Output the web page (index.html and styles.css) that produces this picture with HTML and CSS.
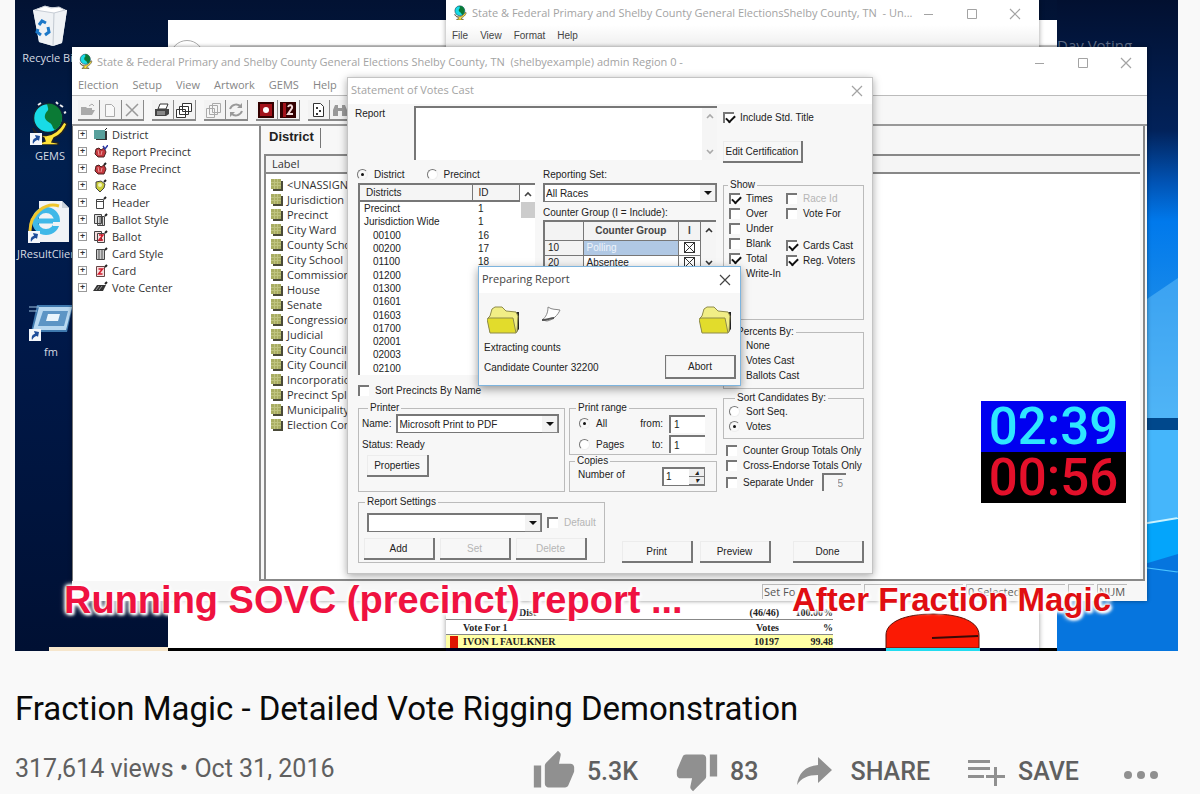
FILE: index.html
```html
<!DOCTYPE html>
<html lang="en">
<head>
  <meta charset="UTF-8" />
  <meta name="viewport" content="width=device-width, initial-scale=1.0" />
  <title>Fraction Magic - Detailed Vote Rigging Demonstration</title>
  <link rel="stylesheet" href="styles.css">
</head>
<body>
  <!-- shared icons -->
  <svg class="sprite" aria-hidden="true">
    <symbol id="i-min" viewBox="0 0 12 12"><path d="M1 6.500h9" fill="none" stroke="currentColor"/></symbol>
    <symbol id="i-max" viewBox="0 0 12 12"><path d="M1.500 1.500h9v9h-9z" fill="none" stroke="currentColor"/></symbol>
    <symbol id="i-close" viewBox="0 0 12 12"><path d="M1 1l10 10M11 1L1 11" fill="none" stroke="currentColor" stroke-width="1.200"/></symbol>
    <symbol id="i-up" viewBox="0 0 10 10"><path d="M2 7l3-3 3 3" fill="none" stroke="currentColor" stroke-width="1.600"/></symbol>
    <symbol id="i-down" viewBox="0 0 10 10"><path d="M2 3l3 3 3-3" fill="none" stroke="currentColor" stroke-width="1.600"/></symbol>
    <symbol id="i-globe" viewBox="0 0 40 44">
      <path d="M3 27c4 10 21 12 31-6l3 2c-3 8-8 12-13 14l-2 4 6 1v2H9v-2l6-2-1-3C8 35 4 32 3 27z" fill="#ffe338" stroke="#222" stroke-width="1.500"/>
      <circle cx="18" cy="17" r="14.500" fill="#18dbe6" stroke="#123" stroke-width="1.500"/>
      <path d="M17 3c8-2 15 6 15 13 0 6-3 11-7 13-3-2-2-5-5-7s-6-4-5-8 4-4 3-7z" fill="#0b7a35"/>
      <path d="M8 4l3-2M30 4l3 2M26 1l2 2M34 12l2-1" stroke="#eee" stroke-width="2"/>
    </symbol>
    <symbol id="i-shortcut" viewBox="0 0 12 12"><path d="M0 0h12v12H0z" fill="#f4f7fb"/><path d="M3 11c-1-4 1-6 3-6L5 2l5 1-1 5-1-1c-2 0-3 1-5 4z" fill="#1e4d9a"/></symbol>
    <symbol id="i-grid" viewBox="0 0 12 12"><path d="M2 2h10v10H2z" fill="#4a4a38"/><path d="M0 0h10v10H0z" fill="#a9ad62"/><path d="M0 3.500h10M0 6.500h10M3.500 0v10M6.500 0v10" stroke="#bfc380" fill="none"/></symbol>
    <symbol id="i-folder" viewBox="0 0 34 28">
      <path d="M26 6l6 0v17l-3 4z" fill="#222"/>
      <path d="M3 26l-2-14 2-2 2-7 3-2h7l4 4 10 1 2 4-1 16z" fill="#f1ee86" stroke="#8e8b4a"/>
      <path d="M3 27L0 13l2-1h24l3 15z" fill="#e2dc2c" stroke="#8e8b4a"/>
    </symbol>
    <symbol id="i-district" viewBox="0 0 15 13"><path d="M3 3h11v9H3z" fill="#333"/><path d="M1 2h11v9H1z" fill="#58a09c"/><path d="M12 2l2-2" stroke="#222"/></symbol>
    <symbol id="i-precinct" viewBox="0 0 15 13"><path d="M3 4l3-1 2 2 3-2 2 4-2 5H5L2 9z" fill="#c3373d" stroke="#4a2222"/><path d="M5 5l1 5M9 6l-1 4" stroke="#efa0a0"/><path d="M10 1l2 3 3-4" stroke="#2b39a4" stroke-width="1.500" fill="none"/></symbol>
    <symbol id="i-base" viewBox="0 0 15 13"><path d="M3 4l3-1 2 2 3-2 2 4-2 5H5L2 9z" fill="#c3373d" stroke="#4a2222"/><path d="M5 5l1 5M9 6l-1 4" stroke="#efa0a0"/><path d="M11 3l2-2" stroke="#222" stroke-width="2"/></symbol>
    <symbol id="i-race" viewBox="0 0 15 13"><path d="M3 3l5-1 4 3-1 4-4 4-4-4z" fill="#c9cc3a" stroke="#444"/><circle cx="7" cy="6" r="2" fill="#f4f4b8"/><path d="M11 3l2-2" stroke="#222" stroke-width="2"/></symbol>
    <symbol id="i-header" viewBox="0 0 15 13"><path d="M3.500 3.500h7v9h-7zM3.500 5.500h7" fill="#fff" stroke="#444"/><path d="M11 3l2-2" stroke="#222" stroke-width="2"/></symbol>
    <symbol id="i-bstyle" viewBox="0 0 15 13"><path d="M1.500 1.500h7v9h-7zM4.500 3.500h7v9h-7z" fill="#ddd" stroke="#444"/><path d="M7 4v8M9.500 4v8" stroke="#555"/><path d="M12 3l2-2" stroke="#222" stroke-width="2"/></symbol>
    <symbol id="i-ballot" viewBox="0 0 15 13"><path d="M1.500 1.500h7v9h-7zM4.500 3.500h7v9h-7z" fill="#f6dede" stroke="#444"/><path d="M6 5h4l-4 5h4" stroke="#d21b2c" fill="none" stroke-width="1.500"/><path d="M12 3l2-2" stroke="#222" stroke-width="2"/></symbol>
    <symbol id="i-cstyle" viewBox="0 0 15 13"><path d="M3.500 2.500h8v10h-8z" fill="#ccc" stroke="#444"/><path d="M6 3v9M9 3v9" stroke="#555"/><path d="M12 3l2-2" stroke="#222" stroke-width="2"/></symbol>
    <symbol id="i-card" viewBox="0 0 15 13"><path d="M3.500 2.500h8v10h-8z" fill="#f6dede" stroke="#644"/><path d="M5.500 5h4l-4 5h4" stroke="#d21b2c" fill="none" stroke-width="1.500"/><path d="M12 3l2-2" stroke="#222" stroke-width="2"/></symbol>
    <symbol id="i-center" viewBox="0 0 15 13"><path d="M0 10l4-6h9l-3 6z" fill="#333"/><path d="M3 9l3-4M6 9l3-4" stroke="#999"/><path d="M12 3l2-2" stroke="#222" stroke-width="2"/></symbol>
  </svg>

  <section class="video" aria-label="Video">
    <div class="wallpaper">
      <svg viewBox="0 0 32 651" preserveAspectRatio="none" aria-hidden="true">
        <defs><linearGradient id="sky" x1="0" y1="0" x2="0" y2="1">
          <stop offset="0" stop-color="#021030"/><stop offset=".2" stop-color="#02225a"/>
          <stop offset=".28" stop-color="#0153b4"/><stop offset=".34" stop-color="#0079ec"/>
          <stop offset=".45" stop-color="#1487ea"/><stop offset=".6" stop-color="#3ba8f2"/>
          <stop offset=".64" stop-color="#41b0f8"/>
        </linearGradient></defs>
        <path d="M0 0h32v651H0z" fill="url(#sky)"/>
        <path d="M0 360l32-82v140H0z" fill="#58b8f6" opacity=".6"/>
        <path d="M0 418h32v12H0z" fill="#00488c"/>
        <path d="M0 430h32v92H0z" fill="#45b6fb"/>
        <path d="M0 538l32-20v54H0z" fill="#04a5fb"/>
        <path d="M0 538l32-20" stroke="#c9f3ff" stroke-width="1.500"/>
        <path d="M0 590l32-36v97H0z" fill="#0675de"/>
        <path d="M0 556l32 16" stroke="#4ac4ff"/>
      </svg>
    </div>
    <span class="wall-text">Day Voting</span>

    <!-- desktop shortcuts -->
    <a class="shortcut s-bin" href="#">
      <svg width="38" height="42" viewBox="0 0 38 42" aria-hidden="true"><path d="M1 5l12-4 22 4-5 33-9 3-14-4z" fill="#dfe4ea"/><path d="M1 5l21 3 13-3-5 33-9 3-14-4z" fill="#eff2f5"/><path d="M22 8l-1 33" stroke="#c3cad2"/><path d="M3 5l10-4 6 2 8-1 6 3-11 3z" fill="#fff" stroke="#c8ced6"/><g fill="none" stroke="#1c78c8" stroke-width="3"><path d="M7 20l3-4 4 2"/><path d="M16 22l1 5-4 3"/><path d="M9 30l-4-3 1-3"/></g></svg>
      Recycle Bin</a>
    <a class="shortcut s-gems" href="#">
      <span class="pic"><svg width="40" height="44"><use href="#i-globe"/></svg><svg class="arrow" width="12" height="12"><use href="#i-shortcut"/></svg></span>
      GEMS</a>
    <a class="shortcut s-java" href="#">
      <span class="pic"><svg width="42" height="42" viewBox="0 0 42 42" aria-hidden="true"><path d="M11 0h23l7 7v34H11z" fill="#f1f3f6"/><path d="M34 0v7h7" fill="#cdd3da"/><circle cx="18" cy="20" r="11" fill="none" stroke="#3fb8e8" stroke-width="6"/><path d="M9 20h19" stroke="#3fb8e8" stroke-width="5"/><path d="M25 23h9" stroke="#f1f3f6" stroke-width="4"/><path d="M2 30C2 12 18 1 31 5" fill="none" stroke="#efc52d" stroke-width="3"/></svg><svg class="arrow" width="12" height="12"><use href="#i-shortcut"/></svg></span>
      JResultClient</a>
    <a class="shortcut s-fm" href="#">
      <span class="pic"><svg width="44" height="38" viewBox="0 0 44 38" aria-hidden="true"><path d="M8 2h36l-6 27H2z" fill="#3f79ae"/><path d="M10 4h33l-6 23H4z" fill="#b8d8f0"/><path d="M14 8h25l-4 15H9z" fill="#5d95c5"/><path d="M19 11h12l-2 7H17z" fill="#eaf5fc"/><path d="M0 4h10M0 8h8" stroke="#9fc3e0"/></svg><svg class="arrow" width="12" height="12"><use href="#i-shortcut"/></svg></span>
      fm</a>

    <!-- browser behind everything else -->
    <div class="window w-back"><div class="nav"><i class="back"></i><i class="address"></i></div></div>
    <div class="cream"></div>

    <!-- report preview window -->
    <div class="window w-preview">
      <div class="titlebar">
        <svg width="15" height="15" class="app"><use href="#i-globe"/></svg>
        <span class="caption">State &amp; Federal Primary and Shelby County General ElectionsShelby County, TN&nbsp; - Un...</span>
        <button aria-label="Minimize"><svg width="12" height="12"><use href="#i-min"/></svg></button>
        <button aria-label="Maximize"><svg width="12" height="12"><use href="#i-max"/></svg></button>
        <button aria-label="Close"><svg width="12" height="12"><use href="#i-close"/></svg></button>
      </div>
      <nav class="menu menu-dark"><a href="#">File</a><a href="#">View</a><a href="#">Format</a><a href="#">Help</a></nav>
      <div class="report">
        <table>
          <tr><td></td><td class="dist">Dist</td><td>(46/46)</td><td>100.00%</td></tr>
          <tr><td></td><td>Vote For 1</td><td>Votes</td><td>%</td></tr>
          <tr class="hit"><td><i></i></td><td>IVON L FAULKNER</td><td>10197</td><td>99.48</td></tr>
        </table>
        <svg width="96" height="38" viewBox="0 0 96 38" aria-hidden="true"><path d="M1 35V22C1 9 20 1 48 1s46 8 46 21v13z" fill="#fb1a04" stroke="#5a1008"/><path d="M47 25l46-2" stroke="#3a0a06" stroke-width="2"/><path d="M1 35h94v3H1z" fill="#22dcf0"/></svg>
      </div>
    </div>

    <!-- GEMS main window -->
    <div class="window w-main">
      <div class="titlebar">
        <svg width="14" height="16" class="app"><use href="#i-globe"/></svg>
        <span class="caption">State &amp; Federal Primary and Shelby County General Elections Shelby County, TN&nbsp; (shelbyexample) admin Region 0 -</span>
        <button aria-label="Minimize"><svg width="12" height="12"><use href="#i-min"/></svg></button>
        <button aria-label="Maximize"><svg width="12" height="12"><use href="#i-max"/></svg></button>
        <button aria-label="Close"><svg width="12" height="12"><use href="#i-close"/></svg></button>
      </div>
      <nav class="menu"><a href="#">Election</a><a href="#">Setup</a><a href="#">View</a><a href="#">Artwork</a><a href="#">GEMS</a><a href="#">Help</a></nav>
      <div class="toolbar">
        <div class="group">
          <button aria-label="Open"><svg viewBox="0 0 16 16"><path d="M1 13V5h5l1 1h5v2h3l-3 5z" fill="#aaa"/><path d="M9 4l3-2 2 2" stroke="#aaa" fill="none"/></svg></button>
          <button aria-label="New"><svg viewBox="0 0 16 16"><path d="M3.500 2.500h6l3 3v9h-9z" fill="#f8f8f8" stroke="#aaa"/></svg></button>
          <button aria-label="Delete"><svg viewBox="0 0 16 16"><path d="M2 2l12 12M14 2L2 14" stroke="#999" stroke-width="1.500"/></svg></button>
        </div>
        <div class="group">
          <button aria-label="Print"><svg viewBox="0 0 16 16"><path d="M4 7l2-5h8l-2 5z" fill="#fff" stroke="#333"/><path d="M1 7h14v5l-3 2H1z" fill="#444"/><path d="M3 10h8M3 12h8" stroke="#ccc"/></svg></button>
          <button aria-label="Copies"><svg viewBox="0 0 16 16"><path d="M6.500 1.500h9v8h-9zM3.500 4.500h9v8h-9zM.500 7.500h9v8h-9z" fill="#fff" stroke="#333"/></svg></button>
        </div>
        <div class="group">
          <button aria-label="Move"><svg viewBox="0 0 16 16"><path d="M6.500 1.500h8v9h-8zM3.500 3.500h8v9h-8zM.500 6.500h8v9h-8z" fill="#f6f6f6" stroke="#aaa"/></svg></button>
          <button aria-label="Refresh"><svg viewBox="0 0 16 16"><path d="M2 7c2-5 8-6 11-2M14 9c-2 5-8 6-11 2" stroke="#999" stroke-width="2" fill="none"/><path d="M14 1v5H9zM2 15v-5h5z" fill="#999"/></svg></button>
        </div>
        <div class="group">
          <button aria-label="Record"><svg viewBox="0 0 16 16"><path d="M0 0h16v16H0z" fill="#300"/><path d="M2 2h12v12H2z" fill="#a3121a"/><circle cx="8" cy="8" r="3" fill="#fff"/></svg></button>
          <button aria-label="Record 2"><svg viewBox="0 0 16 16"><path d="M0 0h16v16H0z" fill="#300"/><path d="M3 1h3v14H3z" fill="#a3121a"/><path d="M8 5c1-3 5-2 4 1l-4 6h5" stroke="#f3dada" stroke-width="2" fill="none"/></svg></button>
        </div>
        <div class="group">
          <button aria-label="Options"><svg viewBox="0 0 16 16"><path d="M3.500 1.500h7l3 3v10h-10z" fill="#fff" stroke="#333"/><path d="M6 5h2v2H6zM9 8h2v2H9zM6 11h2v2H6z" fill="#333"/></svg></button>
          <button aria-label="Find"><svg viewBox="0 0 16 16"><path d="M1 14V8l2-5h3v11zM10 14V3h3l2 5v6zM6 6h4v3H6z" fill="#999"/></svg></button>
        </div>
      </div>
      <div class="panes">
        <ul class="tree">
          <li><b>+</b><svg><use href="#i-district"/></svg>District</li>
          <li><b>+</b><svg><use href="#i-precinct"/></svg>Report Precinct</li>
          <li><b>+</b><svg><use href="#i-base"/></svg>Base Precinct</li>
          <li><b>+</b><svg><use href="#i-race"/></svg>Race</li>
          <li><b>+</b><svg><use href="#i-header"/></svg>Header</li>
          <li><b>+</b><svg><use href="#i-bstyle"/></svg>Ballot Style</li>
          <li><b>+</b><svg><use href="#i-ballot"/></svg>Ballot</li>
          <li><b>+</b><svg><use href="#i-cstyle"/></svg>Card Style</li>
          <li><b>+</b><svg><use href="#i-card"/></svg>Card</li>
          <li><b>+</b><svg><use href="#i-center"/></svg>Vote Center</li>
        </ul>
        <div class="detail">
          <div class="tab"><span>District</span></div>
          <div class="labels">
            <div class="head">Label</div>
            <ul>
              <li><svg><use href="#i-grid"/></svg>&lt;UNASSIGNED&gt;</li>
              <li><svg><use href="#i-grid"/></svg>Jurisdiction</li>
              <li><svg><use href="#i-grid"/></svg>Precinct</li>
              <li><svg><use href="#i-grid"/></svg>City Ward</li>
              <li><svg><use href="#i-grid"/></svg>County School</li>
              <li><svg><use href="#i-grid"/></svg>City School</li>
              <li><svg><use href="#i-grid"/></svg>Commission</li>
              <li><svg><use href="#i-grid"/></svg>House</li>
              <li><svg><use href="#i-grid"/></svg>Senate</li>
              <li><svg><use href="#i-grid"/></svg>Congressional</li>
              <li><svg><use href="#i-grid"/></svg>Judicial</li>
              <li><svg><use href="#i-grid"/></svg>City Council</li>
              <li><svg><use href="#i-grid"/></svg>City Council</li>
              <li><svg><use href="#i-grid"/></svg>Incorporation</li>
              <li><svg><use href="#i-grid"/></svg>Precinct Split</li>
              <li><svg><use href="#i-grid"/></svg>Municipality</li>
              <li><svg><use href="#i-grid"/></svg>Election Contest</li>
            </ul>
          </div>
        </div>
      </div>
      <div class="status"><span>Set Fo</span><span></span><span>0 Selected</span><span></span><span>NUM</span></div>
    </div>

    <!-- Statement of Votes Cast -->
    <form class="window w-dialog" onsubmit="return false">
      <div class="titlebar"><span class="caption">Statement of Votes Cast</span>
        <button type="button" aria-label="Close"><svg width="12" height="12"><use href="#i-close"/></svg></button></div>
      <div class="form">
        <div class="upper">
          <div class="left">
            <div class="report-row">
              <label for="rpt">Report</label>
              <div class="memo"><textarea id="rpt"></textarea><span class="scroll"><svg><use href="#i-up"/></svg><svg><use href="#i-down"/></svg></span></div>
            </div>
            <div class="two">
              <div class="by">
                <div class="line radios">
                  <label><input type="radio" name="by" checked>District</label>
                  <label><input type="radio" name="by">Precinct</label>
                </div>
                <div class="districts">
                  <table>
                    <thead><tr><th>Districts</th><th>ID</th></tr></thead>
                    <tbody>
                      <tr><td>Precinct</td><td>1</td></tr>
                      <tr><td>Jurisdiction Wide</td><td>1</td></tr>
                      <tr class="sub"><td>00100</td><td>16</td></tr>
                      <tr class="sub"><td>00200</td><td>17</td></tr>
                      <tr class="sub"><td>01100</td><td>18</td></tr>
                      <tr class="sub"><td>01200</td><td></td></tr>
                      <tr class="sub"><td>01300</td><td></td></tr>
                      <tr class="sub"><td>01601</td><td></td></tr>
                      <tr class="sub"><td>01603</td><td></td></tr>
                      <tr class="sub"><td>01700</td><td></td></tr>
                      <tr class="sub"><td>02001</td><td></td></tr>
                      <tr class="sub"><td>02003</td><td></td></tr>
                      <tr class="sub"><td>02100</td><td></td></tr>
                    </tbody>
                  </table>
                  <span class="scroll"><svg><use href="#i-up"/></svg><i></i></span>
                </div>
              </div>
              <div class="sets">
                <label class="line" for="set">Reporting Set:</label>
                <div class="combo"><select id="set"><option>All Races</option></select></div>
                <span class="line gap">Counter Group (I = Include):</span>
                <div class="counter">
                  <table>
                    <tr><th></th><th>Counter Group</th><th>I</th></tr>
                    <tr class="picked"><td>10</td><td>Polling</td><td><i class="xbox"></i></td></tr>
                    <tr><td>20</td><td>Absentee</td><td><i class="xbox"></i></td></tr>
                  </table>
                  <span class="scroll dark"><svg><use href="#i-up"/></svg><svg><use href="#i-down"/></svg></span>
                </div>
              </div>
            </div>
            <label class="sort"><input type="checkbox">Sort Precincts By Name</label>
            <div class="printing">
              <fieldset class="printer"><legend>Printer</legend>
                <div class="pair"><label for="prn">Name:</label><div class="combo"><select id="prn"><option>Microsoft Print to PDF</option></select></div></div>
                <p>Status: Ready</p>
                <button type="button" class="btn small">Properties</button>
              </fieldset>
              <div class="stack">
                <fieldset class="range"><legend>Print range</legend>
                  <label><input type="radio" name="pages" checked>All</label><label class="r" for="from">from:</label><input type="text" id="from" value="1">
                  <label><input type="radio" name="pages">Pages</label><label class="r" for="to">to:</label><input type="text" id="to" value="1">
                </fieldset>
                <fieldset class="copies"><legend>Copies</legend>
                  <label for="copies">Number of</label>
                  <div class="spin"><input type="text" id="copies" value="1"><span><i>▴</i><i>▾</i></span></div>
                </fieldset>
              </div>
            </div>
          </div>
          <div class="right">
            <label><input type="checkbox" checked>Include Std. Title</label>
            <button type="button" class="btn cert">Edit Certification</button>
            <fieldset class="show"><legend>Show</legend>
              <div>
                <label><input type="checkbox" checked>Times</label>
                <label><input type="checkbox">Over</label>
                <label><input type="checkbox">Under</label>
                <label><input type="checkbox">Blank</label>
                <label><input type="checkbox" checked>Total</label>
                <label><input type="checkbox">Write-In</label>
              </div>
              <div>
                <label class="off"><input type="checkbox" disabled>Race Id</label>
                <label class="votefor"><input type="checkbox">Vote For</label>
                <label><input type="checkbox" checked>Cards Cast</label>
                <label><input type="checkbox" checked>Reg. Voters</label>
              </div>
            </fieldset>
            <fieldset class="percents"><legend>Percents By:</legend>
              <label><input type="radio" name="pct">None</label>
              <label><input type="radio" name="pct" checked>Votes Cast</label>
              <label><input type="radio" name="pct">Ballots Cast</label>
            </fieldset>
            <fieldset class="cands"><legend>Sort Candidates By:</legend>
              <label><input type="radio" name="cand">Sort Seq.</label>
              <label><input type="radio" name="cand" checked>Votes</label>
            </fieldset>
            <div class="opts">
              <label><input type="checkbox">Counter Group Totals Only</label>
              <label><input type="checkbox">Cross-Endorse Totals Only</label>
              <div class="under"><label><input type="checkbox">Separate Under</label><input type="text" aria-label="Separate under" value="5" disabled></div>
            </div>
          </div>
        </div>
        <div class="lower">
          <fieldset class="settings"><legend>Report Settings</legend>
            <div class="pair"><div class="combo"><select aria-label="Report Settings"><option></option></select></div>
              <label class="off"><input type="checkbox" disabled>Default</label></div>
            <div class="btns"><button type="button" class="btn">Add</button><button type="button" class="btn" disabled>Set</button><button type="button" class="btn" disabled>Delete</button></div>
          </fieldset>
          <div class="final"><button type="button" class="btn">Print</button><button type="button" class="btn">Preview</button><button type="button" class="btn done">Done</button></div>
        </div>
      </div>
    </form>

    <!-- progress popup -->
    <div class="window w-progress">
      <div class="titlebar"><span class="caption">Preparing Report</span>
        <button aria-label="Close"><svg width="12" height="12"><use href="#i-close"/></svg></button></div>
      <div class="anim">
        <svg width="34" height="28"><use href="#i-folder"/></svg>
        <svg class="sheet" width="20" height="18" viewBox="0 0 20 18"><path d="M7 1c4 3 8 2 12 3-2 5-7 10-13 11L1 14c4-3 6-7 6-13z" fill="#fff" stroke="#888"/><path d="M1 14c6 0 8-2 12-2" fill="none" stroke="#555" stroke-width="2"/></svg>
        <svg width="34" height="28"><use href="#i-folder"/></svg>
      </div>
      <p>Extracting counts</p>
      <div class="bottom"><span>Candidate Counter 32200</span><button class="btn abort">Abort</button></div>
    </div>

    <div class="clock"><div class="total">02:39</div><div class="lap">00:56</div></div>
    <div class="overlay o-left">Running SOVC (precinct) report ...</div>
    <div class="overlay o-right">After Fraction Magic</div>
  </section>

  <main class="info">
    <h1>Fraction Magic - Detailed Vote Rigging Demonstration</h1>
    <div class="meta">
      <span class="views">317,614 views • Oct 31, 2016</span>
      <div class="actions">
        <button><svg width="44" height="44" viewBox="0 0 24 24"><path d="M1 21h4V9H1v12zm22-11c0-1.100-.900-2-2-2h-6.310l.950-4.570.030-.320c0-.410-.170-.790-.440-1.060L14.170 1 7.590 7.590C7.220 7.950 7 8.450 7 9v10c0 1.100.900 2 2 2h9c.830 0 1.540-.500 1.840-1.220l3.020-7.050c.090-.230.140-.470.140-.730v-2z"/></svg>5.3K</button>
        <button><svg width="44" height="44" viewBox="0 0 24 24"><path d="M15 3H6c-.830 0-1.540.500-1.840 1.220l-3.020 7.050c-.090.230-.140.470-.140.730v2c0 1.100.900 2 2 2h6.310l-.950 4.570-.030.320c0 .410.170.790.440 1.060L9.830 23l6.590-6.590c.360-.360.580-.860.580-1.410V5c0-1.100-.900-2-2-2zm4 0v12h4V3h-4z"/></svg>83</button>
        <button><svg width="44" height="44" viewBox="0 0 44 44"><path d="M22 8l14 13-14 13v-8C12 26 5 29 1 36c1-11 8-19 21-20z"/></svg>SHARE</button>
        <button><svg width="40" height="44" viewBox="0 0 40 44"><path d="M1 11h22v3H1zM1 18h22v3H1zM1 26h16v3H1zM27 18h3v8h8v3h-8v8h-3v-8h-8v-3h8z"/></svg>SAVE</button>
        <button class="more" aria-label="More actions"><svg width="34" height="44" viewBox="0 0 34 44"><circle cx="4" cy="26" r="4"/><circle cx="17" cy="26" r="4"/><circle cx="30" cy="26" r="4"/></svg></button>
      </div>
    </div>
  </main>
</body>
</html>
```
FILE: styles.css
```css
* {
  box-sizing: border-box;
}
body {
  margin: 0;
  background: #f9f9f9;
  font-family: Roboto, sans-serif;
  overflow: hidden;
}
ul, p, fieldset, legend {
  margin: 0;
  padding: 0;
}
ul {
  list-style: none;
}
button, input, select, textarea {
  font: inherit;
  color: inherit;
  margin: 0;
}
a {
  color: inherit;
  text-decoration: none;
}
.sprite {
  display: none;
}

/* video frame */
.video {
  position: relative;
  aspect-ratio: 1163 / 651;
  margin: 0 22px 0 15px;
  overflow: hidden;
  background: linear-gradient(#021233, #001f4e 25%, #00194a 50%, #001033);
  font-family: "Open Sans", "Noto Sans", sans-serif;
  font-size: 11px;
  line-height: 15px;
  color: #333;
}
.wallpaper {
  position: absolute;
  top: 0;
  right: 0;
  bottom: 0;
  width: 121px;
}
.wallpaper svg {
  display: block;
  width: 100%;
  height: 100%;
}
.wall-text {
  position: absolute;
  left: 1042px;
  top: 38px;
  color: #5f6c86;
  font-size: 15px;
}
.shortcut {
  position: absolute;
  display: flex;
  flex-direction: column;
  align-items: center;
  gap: 3px;
  width: 84px;
  color: #d5dae2;
  white-space: nowrap;
}
.pic {
  position: relative;
}
.pic svg {
  display: block;
}
.pic .arrow {
  position: absolute;
  left: 0;
  bottom: 0;
}
.s-bin { left: -6px; top: 5px; }
.s-gems { left: -7px; top: 101px; }
.s-java { left: -8px; top: 201px; }
.s-fm { left: -6px; top: 303px; }

/* windows */
.window {
  position: absolute;
  display: flex;
  flex-direction: column;
  background: #f7f7f7;
}
.titlebar {
  display: flex;
  align-items: center;
  background: #fff;
  color: #a3a3a3;
}
.titlebar .caption {
  flex: 1;
  min-width: 0;
  white-space: nowrap;
}
.titlebar button {
  flex: none;
  width: 43px;
  height: 24px;
  padding: 0;
  border: 0;
  background: none;
}
.titlebar svg {
  vertical-align: middle;
}
.titlebar .app {
  flex: none;
  margin: 0 4px 0 7px;
}
.menu {
  display: flex;
  gap: 14px;
  padding: 0 6px;
  color: #858585;
}
.w-back {
  left: 153px;
  top: 20px;
  right: 121px;
  bottom: 0;
  background: #fff;
  border-bottom: 3px solid #000;
}
.nav {
  display: flex;
  gap: 26px;
  padding: 20px 0 0 2px;
}
.back {
  width: 34px;
  height: 34px;
  border: 1px solid #aaa;
  border-radius: 50%;
}
.address {
  flex: 1;
  margin-top: 5px;
  border-top: 2px solid #ccc;
}
.cream {
  position: absolute;
  left: 34px;
  bottom: 0;
  width: 119px;
  height: 4px;
  background: #f6e6cc;
}
.w-preview {
  left: 431px;
  top: 0;
  right: 139px;
  bottom: 0;
  background: #fff;
  box-shadow: 0 0 5px rgba(0, 0, 0, .4);
}
.w-preview .titlebar {
  height: 25px;
  padding-right: 3px;
}
.menu-dark {
  height: 23px;
  align-items: center;
  gap: 12px;
  padding-bottom: 2px;
  background: linear-gradient(#fff, #eee);
  color: #444;
  font-family: "Liberation Sans", Arial, sans-serif;
  font-size: 10px;
}

.report {
  display: flex;
  align-items: flex-end;
  gap: 52px;
  margin-top: auto;
  border-bottom: 3px solid #00001e;
  font: bold 10px/13px "Liberation Serif", serif;
  color: #222;
}
.report svg {
  margin-bottom: -3px;
}
.report table {
  width: 387px;
  border-collapse: collapse;
}
.report td {
  height: 15px;
  padding: 0;
  border-bottom: 1px solid #888;
  text-align: right;
  vertical-align: bottom;
}
.report td:first-child { width: 17px; }
.report td:nth-child(2) { text-align: left; }
.report td:last-child { width: 54px; }
.report .dist {
  padding-left: 56px;
}
.report .hit td {
  height: 13px;
  border: 0;
  background: #ffffa5;
}
.report .hit i {
  display: block;
  width: 8px;
  height: 12px;
  margin-left: 4px;
  background: #e01500;
}

.w-main {
  left: 57px;
  top: 47px;
  right: 31px;
  height: 554px;
  box-shadow: 0 0 4px rgba(0, 0, 0, .45);
}
.w-main .titlebar {
  height: 28px;
}
.w-main .menu {
  height: 21px;
  padding-top: 2px;
  background: #fff;
  border-bottom: 1px solid #bbb;
}
.toolbar {
  display: flex;
  gap: 8px;
  height: 30px;
  padding: 4px 6px;
  border-bottom: 2px solid #999;
}
.group {
  display: flex;
}
.toolbar button {
  width: 22px;
  height: 21px;
  padding: 1px 2px;
  border: solid #8a8a8a;
  border-width: 0 1px 2px 0;
  background: #f3f3f3;
}
.toolbar svg {
  display: block;
  width: 16px;
  height: 16px;
}
.panes {
  display: flex;
  flex: 1;
  min-height: 0;
}
.tree {
  width: 187px;
  padding-left: 5px;
  background: #fff;
  border-left: 1px solid #777;
}
.tree li {
  display: flex;
  align-items: center;
  height: 17px;
}
.tree b {
  width: 9px;
  height: 9px;
  border: 1px solid #999;
  font-size: 9px;
  line-height: 6px;
  text-align: center;
}
.tree svg {
  width: 15px;
  height: 13px;
  margin: 0 4px 0 6px;
}
.detail {
  flex: 1;
  display: flex;
  flex-direction: column;
  min-width: 0;
  margin-right: 2px;
  padding: 0 3px;
  border: solid #888;
  border-width: 0 2px 2px 2px;
}
.tab {
  height: 28px;
  padding-top: 2px;
  font: bold 13px/17px "Liberation Sans", Arial, sans-serif;
  color: #222;
}
.tab span {
  display: inline-block;
  height: 20px;
  padding: 0 6px 0 5px;
  border-right: 1px solid #777;
}
.labels {
  flex: 1;
  background: #fff;
  border-top: 2px solid #888;
  border-left: 2px solid #888;
}
.head {
  height: 18px;
  padding-left: 6px;
  border-bottom: 2px solid #888;
  background: #f5f5f5;
}
.labels ul {
  padding: 3px 0 0 5px;
}
.labels li {
  display: flex;
  align-items: center;
  gap: 4px;
  height: 15px;
}
.labels li svg {
  width: 12px;
  height: 12px;
}
.status {
  display: flex;
  justify-content: flex-end;
  gap: 3px;
  height: 20px;
  padding: 3px 20px 2px 0;
}
.status span {
  width: 99px;
  padding-left: 1px;
  border-top: 1px solid #bbb;
  border-left: 1px solid #bbb;
  line-height: 14px;
  color: #555;
}
.status span:nth-child(4) { width: 26px; }
.status span:last-child { width: 30px; }

/* old style controls */
.w-dialog, .w-progress {
  font-family: "Liberation Sans", Arial, sans-serif;
  font-size: 10px;
  line-height: 15px;
  color: #222;
}
.w-dialog .titlebar, .w-progress .titlebar {
  height: 26px;
  padding: 0 0 3px 3px;
  font-family: "Open Sans", "Noto Sans", sans-serif;
  font-size: 11px;
}
.w-dialog .titlebar button, .w-progress .titlebar button {
  width: 31px;
}
.w-dialog label {
  display: flex;
  align-items: center;
  white-space: nowrap;
}
.off, .btn:disabled {
  color: #b5b5b5;
}
input[type="checkbox"], input[type="radio"] {
  appearance: none;
  flex: none;
  width: 11px;
  height: 11px;
  margin-right: 6px;
  background: #fff;
  border: solid #777;
  border-width: 2px 0 0 2px;
}
input[type="checkbox"]:checked::before {
  content: "";
  display: block;
  width: 7px;
  height: 4px;
  margin: 1px 0 0 1px;
  border: solid #111;
  border-width: 0 0 2px 2px;
  transform: rotate(-45deg);
}
input[type="radio"] {
  border-width: 1px;
  border-color: #777 #eee #eee #777;
  border-radius: 50%;
  padding: 3px;
}
input[type="radio"]:checked {
  background: #111 content-box;
  background-clip: content-box;
}
input[type="text"] {
  width: 36px;
  height: 19px;
  padding: 0 3px;
  background: #fff;
  border: solid #777;
  border-width: 2px 0 0 2px;
  border-radius: 0;
}
fieldset {
  min-width: 0;
  border: 1px solid #bbb;
}
legend {
  margin-left: 6px;
  padding: 0 2px;
  line-height: 12px;
}
.btn {
  width: 71px;
  height: 22px;
  padding: 0;
  background: #f7f7f7;
  border: solid #777;
  border-width: 0 2px 2px 0;
  box-shadow: inset 1px 1px #ececec;
}
.combo {
  display: flex;
  position: relative;
  flex: 1;
}
.combo select {
  appearance: none;
  width: 100%;
  height: 19px;
  padding: 0 0 0 1px;
  background: #fff;
  border: solid #777;
  border-width: 2px 1px 1px 2px;
  border-radius: 0;
}
.combo::after {
  content: "";
  position: absolute;
  right: 1px;
  top: 2px;
  width: 15px;
  height: 16px;
  background: #f3f3f3;
  border-bottom: 1px solid #888;
  border-right: 1px solid #888;
}
.combo::before {
  content: "";
  position: absolute;
  right: 5px;
  top: 8px;
  z-index: 1;
  border: 4px solid transparent;
  border-top-color: #111;
  border-bottom: 0;
}
.scroll {
  display: flex;
  flex-direction: column;
  justify-content: space-between;
  align-items: center;
  width: 15px;
  padding: 3px 0;
  background: #f5f5f5;
  color: #aaa;
}
.scroll svg {
  width: 10px;
  height: 10px;
}
.scroll.dark {
  color: #333;
}

/* statement of votes cast */
.w-dialog {
  left: 332px;
  top: 77px;
  width: 526px;
  height: 497px;
  border: 1px solid #c4c4c4;
  box-shadow: 0 2px 8px rgba(0, 0, 0, .35);
}
.form {
  display: flex;
  flex-direction: column;
  flex: 1;
  padding: 2px 8px 10px 10px;
}
.upper {
  display: flex;
  gap: 6px;
  flex: 1;
}
.left {
  display: flex;
  flex-direction: column;
  width: 359px;
}
.right {
  display: flex;
  flex-direction: column;
  flex: 1;
}
.report-row {
  display: flex;
  justify-content: space-between;
  align-items: flex-start;
}
.report-row label {
  margin-left: -3px;
}
.memo {
  display: flex;
  width: 303px;
  height: 54px;
  background: #fff;
  border: solid #777;
  border-width: 2px 0 0 2px;
}
.memo textarea {
  flex: 1;
  border: 0;
  resize: none;
  outline: 0;
}
.two {
  display: flex;
  gap: 8px;
  margin-top: 5px;
}
.line {
  height: 18px;
}
.radios {
  display: flex;
  gap: 22px;
  margin-left: -1px;
}
.by {
  width: 177px;
}
.sets {
  flex: 1;
}
.gap {
  display: block;
  padding-top: 3px;
}
.districts {
  display: flex;
  height: 192px;
  background: #fff;
  border: solid #777;
  border-width: 2px 0 0 2px;
}
.districts table {
  flex: 1;
  border-collapse: collapse;
  line-height: 13px;
}
.districts th {
  height: 16px;
  padding: 0 6px;
  font-weight: normal;
  text-align: left;
  background: #f5f5f5;
  border-right: 1px solid #777;
  border-bottom: 2px solid #777;
}
.districts th:first-child {
  width: 112px;
}
.districts td {
  padding: 0 0 0 4px;
}
.districts td + td {
  padding-left: 6px;
}
.districts .sub td:first-child {
  padding-left: 13px;
}
.districts .scroll {
  justify-content: flex-start;
  gap: 3px;
  height: 100%;
  padding: 4px 0 0;
  background: none;
  color: #444;
}
.districts .scroll i {
  width: 14px;
  height: 16px;
  background: #ccc;
}
.counter {
  display: flex;
  width: 173px;
  border-top: 2px solid #777;
  border-left: 2px solid #777;
}
.counter table {
  flex: 1;
  border-collapse: collapse;
  background: #fff;
}
.counter th, .counter td {
  height: 15px;
  padding: 0 3px;
  border: 1px solid #777;
  border-top: 0;
  border-left: 0;
  line-height: 12px;
}
.counter th, .counter td:first-child {
  background: #f3f3f3;
}
.counter th {
  height: 18px;
  color: #444;
}
.counter th:first-child {
  width: 38px;
}
.picked td:nth-child(2) {
  background: #b0c8e4;
  color: #eef4fb;
}
.xbox {
  display: block;
  width: 11px;
  height: 11px;
  margin: 0 auto;
  border: 1px solid #333;
  background:
    linear-gradient(45deg, transparent 46%, #333 46% 54%, transparent 54%),
    linear-gradient(-45deg, transparent 46%, #333 46% 54%, transparent 54%);
}
.sort {
  margin-top: 8px;
}
.printing {
  display: flex;
  gap: 4px;
  margin-top: 4px;
}
.printer {
  width: 207px;
  height: 90px;
  padding: 0 5px 0 3px;
}
.printer p {
  margin: 4px 0 3px;
}
.printer .btn {
  width: 62px;
  margin-left: 5px;
}
.pair {
  display: flex;
  gap: 5px;
}
.stack {
  flex: 1;
}
.range {
  display: grid;
  grid-template-columns: 1fr auto auto;
  align-items: center;
  gap: 1px 6px;
  height: 53px;
  padding: 0 11px 0 9px;
}
.range legend, .copies legend {
  margin-left: -3px;
}
.range .r {
  justify-content: flex-end;
}
.range input[type="text"] {
  height: 18px;
}
.copies {
  display: flex;
  justify-content: space-between;
  align-items: flex-start;
  height: 37px;
  padding: 0 11px 0 8px;
}
.spin {
  display: flex;
  width: 43px;
  height: 19px;
  background: #fff;
  border: solid #777;
  border-width: 2px 1px 1px 2px;
}
.spin input[type="text"] {
  width: 25px;
  height: 15px;
  padding: 0 2px;
  border: 0;
}
.spin span {
  flex: 1;
  display: flex;
  flex-direction: column;
  background: #eee;
}
.spin i {
  height: 8px;
  border-bottom: 1px solid #777;
  font-size: 8px;
  line-height: 8px;
  text-align: center;
}

.right > label {
  margin: 4px 0 0;
}
.cert {
  width: 80px;
  margin: 16px 0 16px;
}
.show {
  display: flex;
  height: 141px;
  padding-left: 5px;
}
.show legend {
  margin-left: -1px;
}
.show > div:nth-of-type(1) {
  width: 57px;
}
.votefor {
  margin-bottom: 17px;
}
.percents {
  height: 63px;
  margin-top: 6px;
  padding-left: 5px;
}
.cands {
  height: 47px;
  margin-top: 3px;
  padding-left: 5px;
}
.opts {
  margin: 4px 0 0 3px;
}
.under {
  display: flex;
  align-items: center;
  gap: 8px;
}
.under input[type="text"] {
  width: 24px;
  height: 18px;
  padding: 0 0 0 14px;
  background: none;
  color: #888;
}
.lower {
  display: flex;
  justify-content: space-between;
  align-items: flex-end;
}
.settings {
  width: 247px;
  height: 67px;
  padding: 5px 8px 0;
}
.settings .combo {
  flex: none;
  width: 175px;
}
.settings legend {
  margin-left: -2px;
}
.btns {
  display: flex;
  gap: 5px;
  margin: 6px 0 0 -3px;
}
.final {
  display: flex;
  gap: 7px;
}
.final .done {
  margin-left: 15px;
}

/* progress popup */
.w-progress {
  left: 463px;
  top: 266px;
  width: 263px;
  height: 120px;
  border: 1px solid #7db4de;
  box-shadow: 0 3px 9px rgba(0, 0, 0, .4);
}
.w-progress .titlebar {
  color: #444;
}
.w-progress p, .bottom {
  padding-left: 5px;
}
.anim {
  display: flex;
  gap: 20px;
  height: 47px;
  padding: 13px 7px 0 8px;
}
.anim svg:last-child {
  margin-left: auto;
}
.bottom {
  display: flex;
  justify-content: space-between;
  align-items: center;
  padding-right: 4px;
}
.abort {
  height: 24px;
  border-width: 1px 2px 2px 1px;
}

/* stopwatch and captions laid over the screen */
.clock {
  position: absolute;
  right: 52px;
  top: 401px;
  width: 145px;
  text-align: center;
  font: 500 51px/51px Roboto, sans-serif;
}
.total {
  background: #0000f0;
  color: #2ee6ff;
}
.lap {
  background: #000;
  color: #e3102a;
}
.overlay {
  position: absolute;
  white-space: nowrap;
  font-family: "Liberation Sans", Arial, sans-serif;
  font-weight: bold;
  text-shadow: 0 0 2px #fff, 0 0 3px #fff, 0 0 4px #fff, 0 0 5px #fff, 0 0 6px #fff, 2px 2px 3px #fff;
}
.o-left {
  left: 49px;
  top: 579px;
  font-size: 38px;
  line-height: 42px;
  color: #ef1240;
}
.o-right {
  left: 777px;
  top: 579px;
  font-size: 33px;
  line-height: 42px;
  color: #e00e12;
}

/* title and actions */
.info {
  padding: 38px 42px 0 15px;
}
h1 {
  margin: 0;
  font-size: 33px;
  font-weight: 400;
  line-height: 40px;
  color: #0a0a0a;
}
.meta {
  display: flex;
  justify-content: space-between;
  align-items: center;
  padding-top: 20px;
  font-size: 25px;
  color: #606060;
}
.views {
  padding-bottom: 6px;
}
.actions {
  display: flex;
  gap: 37px;
}
.actions button {
  display: flex;
  align-items: center;
  gap: 11px;
  padding: 0;
  border: 0;
  background: none;
  font-weight: 500;
}
.actions .more {
  margin-left: 8px;
}
.actions svg {
  fill: #909090;
}
```
